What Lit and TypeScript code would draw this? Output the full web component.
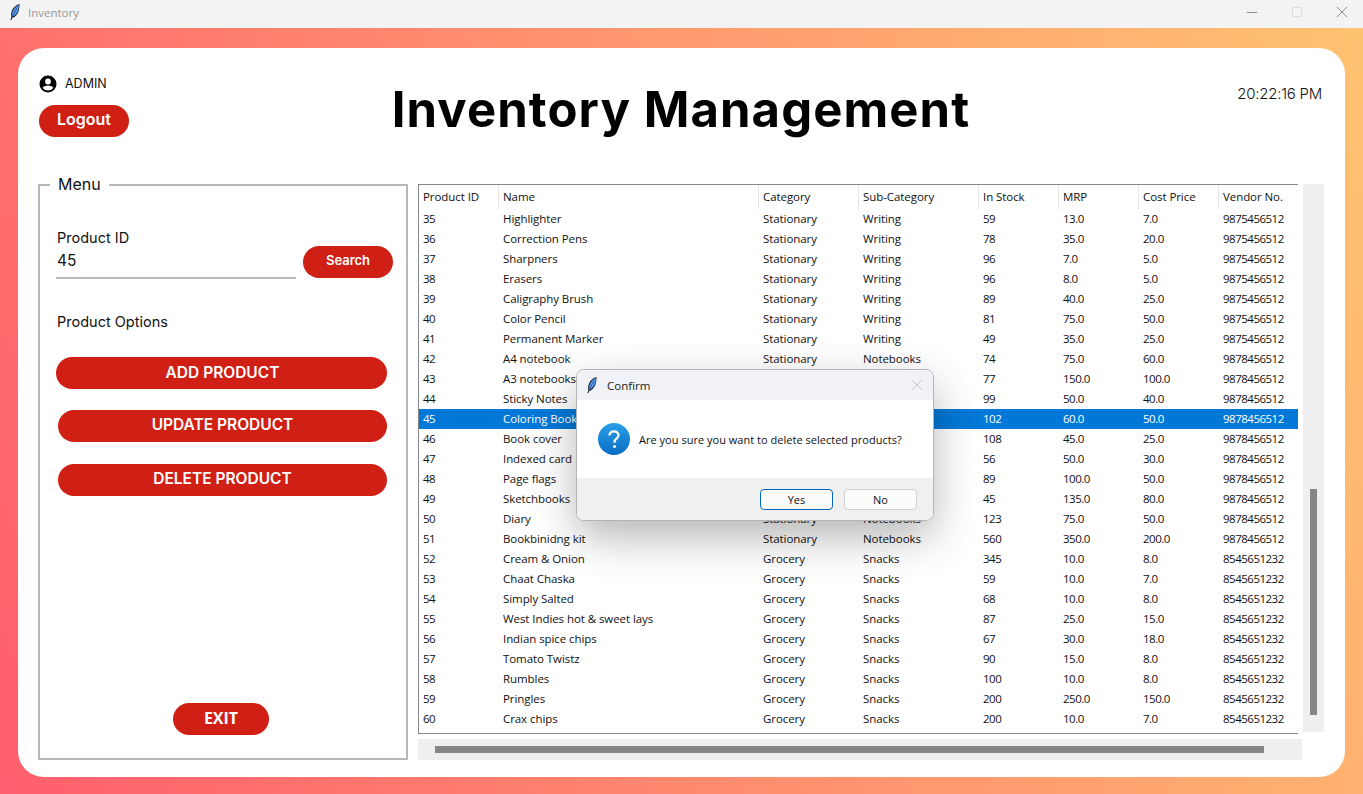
import { LitElement, html, css, svg } from 'lit';
import { customElement } from 'lit/decorators.js';
import { classMap } from 'lit/directives/class-map.js';

type Row = [string, string, string, string, string, string, string, string];

const W1 = '9875456512';
const W2 = '9878456512';
const W3 = '8545651232';

const HEADERS = ['Product ID', 'Name', 'Category', 'Sub-Category', 'In Stock', 'MRP', 'Cost Price', 'Vendor No.'];

const ROWS: Row[] = [
  ['35', 'Highlighter', 'Stationary', 'Writing', '59', '13.0', '7.0', W1],
  ['36', 'Correction Pens', 'Stationary', 'Writing', '78', '35.0', '20.0', W1],
  ['37', 'Sharpners', 'Stationary', 'Writing', '96', '7.0', '5.0', W1],
  ['38', 'Erasers', 'Stationary', 'Writing', '96', '8.0', '5.0', W1],
  ['39', 'Caligraphy Brush', 'Stationary', 'Writing', '89', '40.0', '25.0', W1],
  ['40', 'Color Pencil', 'Stationary', 'Writing', '81', '75.0', '50.0', W1],
  ['41', 'Permanent Marker', 'Stationary', 'Writing', '49', '35.0', '25.0', W1],
  ['42', 'A4 notebook', 'Stationary', 'Notebooks', '74', '75.0', '60.0', W2],
  ['43', 'A3 notebooks', 'Stationary', 'Notebooks', '77', '150.0', '100.0', W2],
  ['44', 'Sticky Notes', 'Stationary', 'Notebooks', '99', '50.0', '40.0', W2],
  ['45', 'Coloring Book', 'Stationary', 'Notebooks', '102', '60.0', '50.0', W2],
  ['46', 'Book cover', 'Stationary', 'Notebooks', '108', '45.0', '25.0', W2],
  ['47', 'Indexed card', 'Stationary', 'Notebooks', '56', '50.0', '30.0', W2],
  ['48', 'Page flags', 'Stationary', 'Notebooks', '89', '100.0', '50.0', W2],
  ['49', 'Sketchbooks', 'Stationary', 'Notebooks', '45', '135.0', '80.0', W2],
  ['50', 'Diary', 'Stationary', 'Notebooks', '123', '75.0', '50.0', W2],
  ['51', 'Bookbinidng kit', 'Stationary', 'Notebooks', '560', '350.0', '200.0', W2],
  ['52', 'Cream & Onion', 'Grocery', 'Snacks', '345', '10.0', '8.0', W3],
  ['53', 'Chaat Chaska', 'Grocery', 'Snacks', '59', '10.0', '7.0', W3],
  ['54', 'Simply Salted', 'Grocery', 'Snacks', '68', '10.0', '8.0', W3],
  ['55', 'West Indies hot & sweet lays', 'Grocery', 'Snacks', '87', '25.0', '15.0', W3],
  ['56', 'Indian spice chips', 'Grocery', 'Snacks', '67', '30.0', '18.0', W3],
  ['57', 'Tomato Twistz', 'Grocery', 'Snacks', '90', '15.0', '8.0', W3],
  ['58', 'Rumbles', 'Grocery', 'Snacks', '100', '10.0', '8.0', W3],
  ['59', 'Pringles', 'Grocery', 'Snacks', '200', '250.0', '150.0', W3],
  ['60', 'Crax chips', 'Grocery', 'Snacks', '200', '10.0', '7.0', W3],
];

// the default tk window icon
const feather = () => html`<svg class="feather" viewBox="0 0 12 18" width="12" height="18">
  <path d="M10.600 1C7 2 3.400 5 2.400 9.500c-.4 1.800-.3 3.400.1 4.600L1.500 17l.9.3.9-2.600c3-.6 5.500-3.500 6.400-7 .5-2.400.8-4.800.9-6.700z" fill="#0d1420"></path>
  <path d="M10 1.900C7.200 3 4.200 5.600 3.300 9.600c-.3 1.500-.3 2.900 0 3.900 2.800-.4 5-3.300 5.900-6.300.4-1.700.7-3.600.8-5.300z" fill="#5596ea"></path>
  <path d="M8.400 4.500C6.600 7 5 10 3.800 13" stroke="#1d3f78" stroke-width=".6" fill="none"></path>
</svg>`;

const userIcon = svg`<path fill-rule="evenodd" d="M9 .5a8.500 8.500 0 1 0 0 17 8.500 8.500 0 0 0 0-17zM9 3.600a2.900 2.900 0 1 1 0 5.800 2.900 2.900 0 0 1 0-5.800zM9 15.400c-2.200 0-4.200-1-5.400-2.700 1-1.400 3.500-2.100 5.400-2.100s4.400.7 5.400 2.100C13.200 14.400 11.200 15.400 9 15.400z"></path>`;

@customElement('app-root')
export class AppRoot extends LitElement {
  static styles = css`
    :host {
      display: flex;
      flex-direction: column;
      width: 1363px;
      height: 794px;
      overflow: hidden;
      position: relative;
      font-family: 'Inter', 'Liberation Sans', sans-serif;
      color: #111;
    }

    /* window chrome */
    .titlebar {
      flex: none;
      height: 28px;
      background: #f3f3f3;
      display: flex;
      align-items: center;
      padding-left: 9px;
      font-family: 'Open Sans', sans-serif;
      font-size: 11.500px;
      color: #9a9a9a;
    }
    .titlebar .feather {
      margin-right: 7px;
      margin-top: -4px;
    }
    .titlebar > span { padding-bottom: 3px; }
    .controls {
      margin-left: auto;
      display: flex;
      align-items: center;
      gap: 35px;
      padding-right: 16px;
      margin-top: -4px;
    }
    .min { width: 10px; height: 1px; background: #8c8c8c; }
    .max { width: 8px; height: 8px; border: 1px solid #dcdcdc; border-radius: 1px; }
    .close { display: block; }

    .desk {
      flex: 1;
      min-height: 0;
      padding: 20px 18px 17px;
      background: linear-gradient(70deg, #ff5f6d, #ffc371);
    }
    .card {
      height: 100%;
      box-sizing: border-box;
      background: #fff;
      border-radius: 26px;
      padding: 0 21px 17px 20px;
      display: flex;
      flex-direction: column;
    }

    /* header */
    .head {
      flex: none;
      height: 136px;
      display: grid;
      grid-template-columns: 1fr auto 1fr;
    }
    .user {
      padding: 27px 0 0 1px;
    }
    .who {
      display: flex;
      align-items: center;
      gap: 8px;
      height: 18px;
      font-size: 12.500px;
      margin-bottom: 12px;
    }
    .who span { padding-bottom: 2px; }
    h1 {
      margin: 0;
      padding-top: 29px;
      font-size: 49px;
      line-height: 66px;
      font-weight: 700;
      letter-spacing: 1.100px;
      color: #000;
      white-space: nowrap;
    }
    .clock {
      justify-self: end;
      padding: 36px 2px 0 0;
      font-size: 15px;
      line-height: 20px;
      font-weight: 300;
      letter-spacing: -0.25px;
    }

    .pill {
      display: flex;
      align-items: center;
      justify-content: center;
      height: 32px;
      box-sizing: border-box;
      border: 0;
      padding: 0 0 2px;
      border-radius: 16px;
      background: #d01f15;
      color: #fff;
      font-family: inherit;
      font-weight: 600;
      font-size: 15.500px;
    }
    .logout { width: 90px; font-size: 16px; padding-bottom: 4px; }

    /* body */
    .body {
      flex: 1;
      min-height: 0;
      display: flex;
      gap: 10px;
    }

    .menu {
      position: relative;
      flex: none;
      width: 370px;
      box-sizing: border-box;
      border: 2px solid #b9b9b9;
      padding: 0 16px;
      display: flex;
      flex-direction: column;
    }
    .legend {
      position: absolute;
      top: -13px;
      left: 10px;
      padding: 0 8px;
      background: #fff;
      font-size: 16px;
      line-height: 22px;
    }
    .label {
      font-size: 14.500px;
      line-height: 20px;
      padding-left: 1px;
    }
    .search-label { margin-top: 42px; }
    .search {
      display: flex;
      align-items: flex-start;
      gap: 7px;
      height: 31px;
    }
    input {
      flex: none;
      width: 240px;
      height: 31px;
      box-sizing: border-box;
      border: 0;
      border-bottom: 2px solid #b9b9b9;
      outline: 0;
      padding: 0 0 5px 1px;
      font-family: inherit;
      font-size: 15.500px;
      color: #111;
      background: transparent;
    }
    .search .pill { flex: none; width: 90px; font-size: 13px; margin-top: -2px; padding-bottom: 4px; }
    .options-label { margin-top: 33px; }
    .add { width: 331px; margin-top: 25px; padding-left: 2px; }
    .update { width: 329px; margin: 21px 0 0 2px; padding-bottom: 4px; }
    .delete { width: 329px; margin: 22px 0 0 2px; padding-bottom: 4px; }
    .exit {
      width: 96px;
      margin: auto 0 23px 117px;
      font-family: 'Open Sans', sans-serif;
      font-weight: 700;
      font-size: 16px;
    }

    /* product table */
    .data {
      flex: none;
      width: 906px;
      display: grid;
      grid-template-columns: 880px 21px;
      grid-template-rows: 548px 21px;
      column-gap: 5px;
      row-gap: 7px;
    }
    .table {
      height: 550px;
      box-sizing: border-box;
      border: 1px solid #828790;
      border-right: 0;
      font-family: 'Open Sans', sans-serif;
      font-size: 11.500px;
      letter-spacing: -0.07px;
      color: #111;
      overflow: hidden;
    }
    .tr {
      display: grid;
      grid-template-columns: 80px 260px 100px 120px 80px 80px 80px 79px;
      height: 20px;
      line-height: 20px;
    }
    .tr span {
      padding-left: 4px;
      white-space: nowrap;
      overflow: hidden;
    }
    .tr:not(.th) span:nth-child(1),
    .tr:not(.th) span:nth-child(n + 5) {
      letter-spacing: -0.5px;
    }
    .th {
      height: 24px;
      line-height: 24px;
    }
    .th span { border-right: 1px solid #e5e5e5; }
    .th span:last-child { border-right: 0; }
    .tr.sel {
      background: #0078d7;
      color: #fff;
    }
    .vbar {
      background: #efefef;
      display: flex;
      flex-direction: column;
      align-items: center;
    }
    .vbar i {
      display: block;
      width: 7px;
      height: 226px;
      margin-top: 305px;
      background: #868686;
    }
    .hbar {
      width: 884px;
      background: #efefef;
      grid-column: 1 / span 2;
      display: flex;
      align-items: center;
    }
    .hbar i {
      display: block;
      width: 829px;
      height: 7px;
      margin-left: 17px;
      background: #868686;
    }

    /* confirm dialog */
    .dialog {
      position: absolute;
      left: 576px;
      top: 369px;
      width: 358px;
      height: 152px;
      box-sizing: border-box;
      border: 1px solid #b4b4b4;
      border-radius: 8px;
      overflow: hidden;
      background: #fff;
      display: flex;
      flex-direction: column;
      font-family: 'Open Sans', sans-serif;
    }
    .dialog-shadow {
      position: absolute;
      left: 577px;
      top: 370px;
      width: 356px;
      height: 150px;
      border-radius: 8px;
      box-shadow: 0 16px 44px rgba(0, 0, 0, 0.3);
    }
    .dlg-title {
      flex: none;
      height: 30px;
      background: #f0f2f7;
      display: flex;
      align-items: center;
      padding-left: 9px;
      font-size: 11.500px;
      color: #222;
    }
    .dlg-title .feather { margin-right: 9px; }
    .dlg-title .x { margin-left: auto; margin-right: 11px; }
    .dlg-main {
      flex: 1;
      display: flex;
      align-items: center;
      gap: 9px;
      padding: 0 0 0 21px;
      font-size: 11px;
      letter-spacing: 0.02px;
      color: #111;
    }
    .dlg-foot {
      flex: none;
      height: 42px;
      box-sizing: border-box;
      background: #f0f0f0;
      display: flex;
      justify-content: flex-end;
      gap: 11px;
      padding: 11px 16px 0 0;
    }
    .dlg-foot button {
      width: 73px;
      height: 21px;
      box-sizing: border-box;
      border: 1px solid #d0d0d0;
      border-radius: 4px;
      background: #fbfbfb;
      padding: 0;
      font-family: inherit;
      font-size: 11px;
      color: #111;
    }
    .dlg-foot button.def { border-color: #0067c0; }
  `;

  render() {
    return html`
      <div class="titlebar">
        ${feather()}
        <span>Inventory</span>
        <div class="controls">
          <div class="min"></div>
          <div class="max"></div>
          <svg class="close" width="10" height="10" viewBox="0 0 10 10"><path d="M0 0l10 10M10 0L0 10" stroke="#8c8c8c" fill="none"></path></svg>
        </div>
      </div>
      <div class="desk">
        <div class="card">
          <div class="head">
            <div class="user">
              <div class="who">
                <svg width="18" height="18" viewBox="0 0 18 18">${userIcon}</svg>
                <span>ADMIN</span>
              </div>
              <button class="pill logout">Logout</button>
            </div>
            <h1>Inventory Management</h1>
            <div class="clock">20:22:16 PM</div>
          </div>
          <div class="body">
            <div class="menu">
              <div class="legend">Menu</div>
              <div class="label search-label">Product ID</div>
              <div class="search">
                <input .value=${'45'} />
                <button class="pill">Search</button>
              </div>
              <div class="label options-label">Product Options</div>
              <button class="pill add">ADD PRODUCT</button>
              <button class="pill update">UPDATE PRODUCT</button>
              <button class="pill delete">DELETE PRODUCT</button>
              <button class="pill exit">EXIT</button>
            </div>
            <div class="data">
              <div class="table">
                <div class="tr th">${HEADERS.map((h) => html`<span>${h}</span>`)}</div>
                ${ROWS.map(
                  (r) => html`<div class="tr ${classMap({ sel: r[0] === '45' })}">
                    ${r.map((c) => html`<span>${c}</span>`)}
                  </div>`
                )}
              </div>
              <div class="vbar"><i></i></div>
              <div class="hbar"><i></i></div>
            </div>
          </div>
        </div>
      </div>
      <div class="dialog-shadow"></div>
      <div class="dialog">
        <div class="dlg-title">
          ${feather()}
          <span>Confirm</span>
          <svg class="x" width="10" height="10" viewBox="0 0 10 10"><path d="M0 0l10 10M10 0L0 10" stroke="#c8c8c8" fill="none"></path></svg>
        </div>
        <div class="dlg-main">
          <svg width="32" height="32" viewBox="0 0 32 32">
            <defs>
              <linearGradient id="q" x1="0" y1="0" x2="0" y2="1">
                <stop offset="0" stop-color="#2a9fe8"></stop>
                <stop offset="1" stop-color="#0a6cc4"></stop>
              </linearGradient>
            </defs>
            <circle cx="16" cy="16" r="16" fill="url(#q)"></circle>
            <path d="M11.500 12.500c0-2.600 2-4.200 4.500-4.200s4.500 1.500 4.500 3.900c0 3.300-4 3.400-4 6.600v1" fill="none" stroke="#fff" stroke-width="2.300"></path>
            <circle cx="16.500" cy="23.500" r="1.500" fill="#fff"></circle>
          </svg>
          <span>Are you sure you want to delete selected products?</span>
        </div>
        <div class="dlg-foot">
          <button class="def">Yes</button>
          <button>No</button>
        </div>
      </div>
    `;
  }
}
